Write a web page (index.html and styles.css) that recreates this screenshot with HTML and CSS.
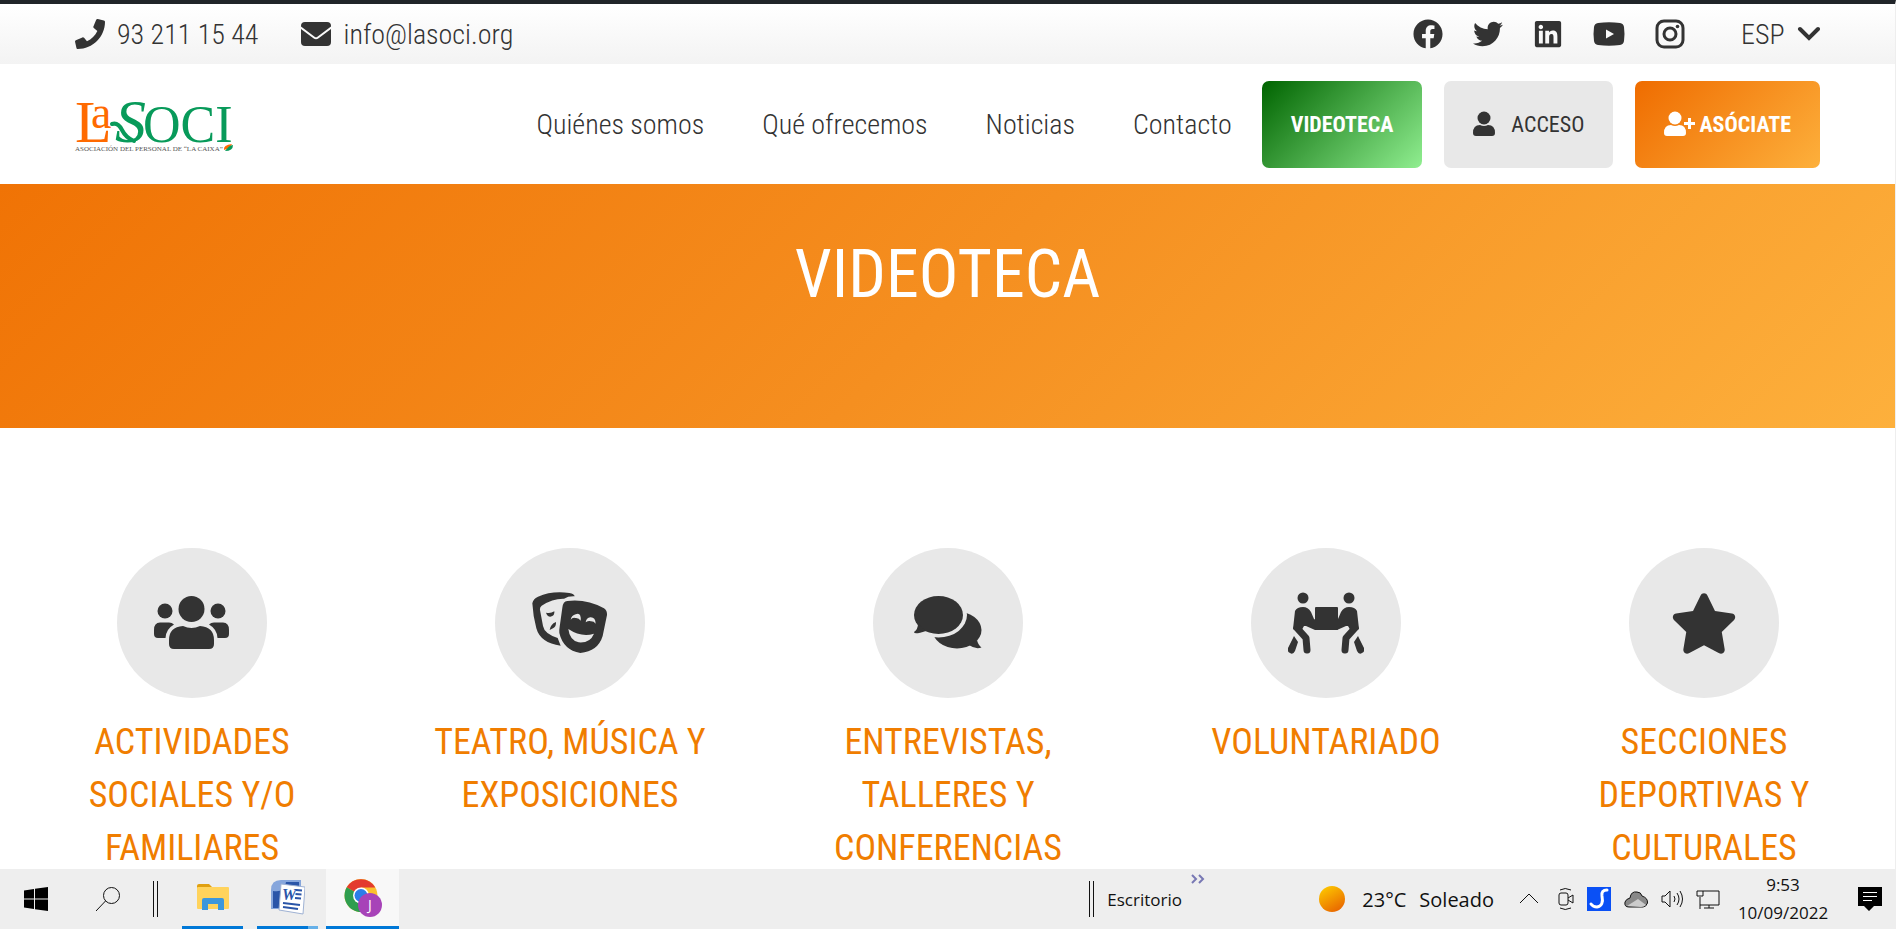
FILE: index.html
```html
<!DOCTYPE html>
<html lang="es">
<head>
    <meta charset="UTF-8">
    <meta name="viewport" content="width=device-width, initial-scale=1.0">
    <title>Videoteca - La Soci</title>
    <link rel="stylesheet" href="styles.css">
</head>
<body>
    <div class="site">
        <!-- Barra superior -->
        <div class="topbar">
            <div class="contact">
                <a href="#">
                    <svg width="30" height="30" viewBox="0 0 512 512"><path d="M493.4 24.6l-104-24c-11.3-2.6-22.9 3.3-27.5 13.9l-48 112c-4.2 9.8-1.4 21.3 6.9 28l60.6 49.6c-36 76.7-98.9 140.5-177.2 177.2l-49.6-60.6c-6.8-8.3-18.2-11.1-28-6.9l-112 48C3.9 366.5-2 378.1.6 389.4l24 104C27.1 504.2 36.7 512 48 512c256.1 0 464-207.5 464-464 0-11.2-7.7-20.9-18.6-23.4z"/></svg>
                    <span>93 211 15 44</span>
                </a>
                <a href="#">
                    <svg width="30" height="30" viewBox="0 0 30 30"><rect y="3" width="30" height="24" rx="4"/><path class="line-light" d="M-1 8L13 18.5Q15 20 17 18.5L31 8"/></svg>
                    <span>info@lasoci.org</span>
                </a>
            </div>
            <div class="social">
                <a href="#" aria-label="Facebook"><svg width="30" height="30" viewBox="0 0 512 512"><path d="M504 256C504 119 393 8 256 8S8 119 8 256c0 123.78 90.69 226.38 209.25 245V327.69h-63V256h63v-54.64c0-62.15 37-96.48 93.67-96.48 27.14 0 55.52 4.84 55.52 4.84v61h-31.28c-30.8 0-40.41 19.12-40.41 38.73V256h68.78l-11 71.69h-57.78V501C413.31 482.38 504 379.78 504 256z"/></svg></a>
                <a href="#" aria-label="Twitter"><svg width="30" height="30" viewBox="0 0 512 512"><path d="M459.37 151.716c.325 4.548.325 9.097.325 13.645 0 138.72-105.583 298.558-298.558 298.558-59.452 0-114.68-17.219-161.137-47.106 8.447.974 16.568 1.299 25.34 1.299 49.055 0 94.213-16.568 130.274-44.832-46.132-.975-84.792-31.188-98.112-72.772 6.498.974 12.995 1.624 19.818 1.624 9.421 0 18.843-1.3 27.614-3.573-48.081-9.747-84.143-51.98-84.143-102.985v-1.299c13.969 7.797 30.214 12.67 47.431 13.319-28.264-18.843-46.781-51.005-46.781-87.391 0-19.492 5.197-37.36 14.294-52.954 51.655 63.675 129.3 105.258 216.365 109.807-1.624-7.797-2.599-15.918-2.599-24.04 0-57.828 46.782-104.934 104.934-104.934 30.213 0 57.502 12.67 76.67 33.137 23.715-4.548 46.456-13.32 66.599-25.34-7.798 24.366-24.366 44.833-46.132 57.827 21.117-2.273 41.584-8.122 60.426-16.243-14.292 20.791-32.161 39.308-52.628 54.253z"/></svg></a>
                <a href="#" aria-label="LinkedIn"><svg width="30" height="30" viewBox="-32 0 512 512"><path d="M416 32H31.9C14.3 32 0 46.5 0 64.3v383.4C0 465.5 14.3 480 31.9 480H416c17.6 0 32-14.5 32-32.3V64.3c0-17.8-14.4-32.3-32-32.3zM135.4 416H69V202.2h66.5V416zm-33.2-243c-21.3 0-38.5-17.3-38.5-38.5S80.9 96 102.2 96c21.2 0 38.5 17.3 38.5 38.5 0 21.3-17.2 38.5-38.5 38.5zm282.1 243h-66.4V312c0-24.8-.5-56.7-34.5-56.7-34.6 0-39.9 27-39.9 54.9V416h-66.4V202.2h63.7v29.2h.9c8.9-16.8 30.6-34.5 62.9-34.5 67.2 0 79.7 44.3 79.7 101.9V416z"/></svg></a>
                <a href="#" aria-label="YouTube"><svg width="32" height="30" viewBox="0 0 32 30"><path d="M5 4Q16 2.500 27 4Q30.500 4.500 31 8Q32 15 31 22Q30.500 25.500 27 26Q16 27.500 5 26Q1.500 25.500 1 22Q0 15 1 8Q1.500 4.500 5 4zM13 10.500V19.500L21 15z"/></svg></a>
                <a href="#" aria-label="Instagram"><svg width="30" height="30" viewBox="0 0 30 30"><rect class="line" x="2" y="2" width="26" height="26" rx="7"/><circle class="line" cx="15" cy="15" r="6"/><circle cx="22.500" cy="7.500" r="1.800"/></svg></a>
            </div>
            <div class="language">
                <label class="hidden" for="language">Idioma</label>
                <select id="language">
                    <option>ESP</option>
                    <option>CAT</option>
                </select>
                <svg width="24" height="16" viewBox="0 0 24 16"><path class="chevron" d="M4 3l9 9 9-9"/></svg>
            </div>
        </div>

        <!-- Cabecera -->
        <header class="header">
            <a class="logo" href="#" aria-label="La Soci">
                <svg width="160" height="56" viewBox="75 96 160 56">
                    <g class="logo-orange">
                        <text x="75" y="142" font-size="60">L</text>
                        <text x="91" y="128" font-size="46">a</text>
                    </g>
                    <g class="logo-green">
                        <text x="115" y="142" font-size="62" font-style="italic">S</text>
                        <text x="143" y="142" font-size="52">OCI</text>
                    </g>
                    <path class="logo-swash" d="M112 124Q118 122 122 130T134 141"/>
                    <text class="logo-caption" x="75" y="151" font-size="7">ASOCIACIÓN DEL PERSONAL DE “LA CAIXA”</text>
                    <path fill="#ff6a00" d="M224 150Q223 145 232 144Q230 148 224 150z"/>
                    <path fill="#089a5a" d="M225 151Q229 145 233 145Q233 151 225 151z"/>
                </svg>
            </a>
            <nav class="menu">
                <a href="#">Quiénes somos</a>
                <a href="#">Qué ofrecemos</a>
                <a href="#">Noticias</a>
                <a href="#">Contacto</a>
            </nav>
            <div class="buttons">
                <button class="btn btn-green">VIDEOTECA</button>
                <button class="btn btn-gray">
                    <svg width="22" height="26" viewBox="0 0 22 26"><circle cx="11" cy="7" r="6.500"/><path d="M0 22Q0 14 7 14Q11 16 15 14Q22 14 22 22Q22 25 19 25H3Q0 25 0 22z"/></svg>
                    ACCESO
                </button>
                <button class="btn btn-orange">
                    <svg width="31" height="26" viewBox="0 0 31 26"><circle cx="11" cy="7" r="6.500"/><path d="M0 22Q0 14 7 14Q11 16 15 14Q22 14 22 22Q22 25 19 25H3Q0 25 0 22zM24 7h3v4h4v3h-4v4h-3v-4h-4v-3h4z"/></svg>
                    ASÓCIATE
                </button>
            </div>
        </header>

        <section class="banner">
            <h1>VIDEOTECA</h1>
        </section>

        <!-- Categorías -->
        <main class="categories">
            <a class="category" href="#">
                <span class="circle">
                    <svg width="76" height="54" viewBox="154 596 76 54">
                        <circle cx="165" cy="611" r="7.500"/><circle cx="218" cy="611" r="7.500"/><circle cx="191.500" cy="609" r="13"/>
                        <path d="M160 622.500H169Q172 622.500 174 624.500Q166 629 165.500 638H158Q154 638 154 634V630Q154 622.500 160 622.500z"/>
                        <path d="M223 622.500H214Q211 622.500 209 624.500Q217 629 217.500 638H225Q229 638 229 634V630Q229 622.500 223 622.500z"/>
                        <path d="M183 626Q191.500 630 200 626Q214 627 214 640V644Q214 649 209 649H174Q169 649 169 644V640Q169 627 183 626z"/>
                    </svg>
                </span>
                <h2>ACTIVIDADES SOCIALES Y/O FAMILIARES</h2>
            </a>
            <a class="category" href="#">
                <span class="circle">
                    <svg width="76" height="62" viewBox="36 28 228 186">
                        <path d="M37 62Q39 49 54 42Q95 24 148 31Q163 34 164 41Q145 40 132 48Q98 47 65 69Q59 73 60 82L69 130Q73 153 113 166L122 189Q61 181 49 137Q39 100 37 62z"/>
                        <path d="M78 90Q91 94 103 86Q105 101 91 102Q82 102 78 90zM89 142Q91 125 108 118Q109 132 99 137z"/>
                        <path fill-rule="evenodd" d="M142 55Q200 48 252 77Q262 84 261 97L248 160Q234 206 181 211Q130 202 118 151Q117 143 119 132L127 75Q129 56 142 55zM152 111Q157 104 166 106Q177 105 182 114Q184 88 167 95Q155 98 152 111zM197 119Q206 113 213 116Q222 116 227 123Q226 103 211 104Q199 106 197 119zM145 139Q149 173 176 179Q210 182 222 153Q184 165 145 139z"/>
                    </svg>
                </span>
                <h2>TEATRO, MÚSICA Y EXPOSICIONES</h2>
            </a>
            <a class="category" href="#">
                <span class="circle">
                    <svg width="70" height="54" viewBox="913 596 70 54">
                        <ellipse cx="957" cy="630" rx="24.500" ry="18.500"/>
                        <path d="M977 640Q978 645 981.500 647.500Q976 650 969 645z"/>
                        <ellipse class="bubble-gap" cx="938.500" cy="615" rx="28.500" ry="22.500"/>
                        <ellipse cx="938.500" cy="615" rx="24.500" ry="19"/>
                        <path d="M918 624Q918 629 914 632Q914 635 926 631z"/>
                    </svg>
                </span>
                <h2>ENTREVISTAS, TALLERES Y CONFERENCIAS</h2>
            </a>
            <a class="category" href="#">
                <span class="circle">
                    <svg width="76" height="62" viewBox="1287 592 76 62">
                        <rect x="1314" y="607" width="23" height="23" rx="1"/>
                        <g id="carrier">
                            <circle cx="1302" cy="598" r="5.500"/>
                            <path class="limb" d="M1296 628L1305 638L1306 650"/>
                            <path d="M1293 636L1297 642L1294 651Q1292 655 1289 653Q1286 652 1287 648z"/>
                            <path d="M1292 629L1294 611Q1296 607 1302 607Q1307 607 1310 612L1313 619Q1314 620 1317 620V630H1314L1305 626L1303 626L1299 633z"/>
                        </g>
                        <use href="#carrier" transform="translate(2650 0) scale(-1 1)"/>
                    </svg>
                </span>
                <h2>VOLUNTARIADO</h2>
            </a>
            <a class="category" href="#">
                <span class="circle">
                    <svg width="68" height="61" viewBox="0 0 576 512"><path d="M316.9 18C311.6 7 300.4 0 288.1 0s-23.4 7-28.8 18L195 150.3 51.4 171.5c-12 1.800-22 10.200-25.700 21.700s-.7 24.200 7.900 32.700L137.800 329 113.200 474.700c-2 12 3 24.200 12.900 31.300s23 8 33.800 2.300l128.300-68.500 128.300 68.500c10.800 5.700 23.900 4.900 33.800-2.300s14.900-19.300 12.900-31.300L438.500 329 542.700 225.900c8.600-8.500 11.700-21.200 7.900-32.700s-13.700-19.900-25.700-21.700L381.200 150.300 316.900 18z"/></svg>
                </span>
                <h2>SECCIONES DEPORTIVAS Y CULTURALES</h2>
            </a>
        </main>
    </div>

    <!-- Barra de tareas -->
    <footer class="taskbar">
        <button class="task" aria-label="Inicio"><svg width="24" height="24" viewBox="0 0 24 24"><path d="M0 3.500L10 2v9.500H0zM11 1.800L24 0v11.500H11zM0 12.500h10V22L0 20.500zM11 12.500h13V24l-13-1.800z"/></svg></button>
        <button class="task" aria-label="Buscar"><svg class="thin" width="24" height="24" viewBox="0 0 24 24"><circle cx="15.500" cy="8.500" r="8"/><path d="M9.500 14L0 24"/></svg></button>
        <span class="grip"></span>
        <button class="task app" aria-label="Explorador de archivos">
            <svg width="32" height="28" viewBox="0 0 32 28"><path fill="#e0a010" d="M0 2Q0 0 2 0H12L15 3V7H0z"/><rect y="3" width="32" height="22" rx="1" fill="#ffd35c"/><path fill="#3c97dc" d="M5 26V16Q5 14 7 14H25Q27 14 27 16V26H21V20H11V26z"/></svg>
        </button>
        <button class="task app app-word" aria-label="Word">
            <svg width="34" height="35" viewBox="0 0 34 35"><path fill="#86a6dc" d="M0 29V10Q0 0 10 0H30V29z"/><path fill="#2a55a8" d="M2 28V11Q14 13 15 2H28V28z"/><path fill="#fff" stroke="#9fb2d4" d="M10 4L34 7L32 34L8 30z"/><text x="11" y="20" font-size="16">W</text><path stroke="#2a55a8" stroke-width="2" d="M25 10l6 .5M24.500 14l6 .5M24 18l6 .5M12 23l17 2M12 27l15 2"/></svg>
        </button>
        <button class="task app app-active" aria-label="Chrome">
            <svg width="38" height="38" viewBox="0 0 38 38"><circle cx="17" cy="16.500" r="16.500" fill="#fbc02d"/><path fill="#e33b2e" d="M17 16.500L2.700 8.300A16.500 16.500 0 0 1 31.300 8.500H17z"/><path fill="#2f9e4f" d="M17 16.500L2.700 8.300A16.500 16.500 0 0 0 17 33L24 20.500z"/><circle cx="17" cy="16.500" r="8" fill="#fff"/><circle cx="17" cy="16.500" r="6.500" fill="#2b7de9"/><circle cx="26" cy="26" r="12" fill="#a743b8"/><text class="avatar" x="26" y="31" font-size="14">J</text></svg>
        </button>

        <span class="grip grip-desktop"></span>
        <span class="desktop">Escritorio</span>
        <svg class="more" width="14" height="10" viewBox="0 0 14 10"><path d="M1 1l4 4-4 4M8 1l4 4-4 4"/></svg>
        <span class="sun"></span>
        <span class="weather"><span>23°C</span><span>Soleado</span></span>
        <svg class="thin arrow" width="18" height="24" viewBox="0 0 18 24"><path d="M0 16l9-9 9 9"/></svg>
        <div class="tray">
            <svg class="thin" width="16" height="24" viewBox="0 0 16 24"><rect x="1" y="6" width="9" height="12" rx="2"/><path d="M10 11l5-3v8l-5-3M2 3q5-3 11 0M2 21q5 3 11 0"/></svg>
            <svg width="24" height="24" viewBox="0 0 24 24"><rect width="24" height="24" fill="#0a50f5"/><path fill="none" stroke="#fff" stroke-width="3" stroke-linecap="round" d="M20 3Q14 3 15 9Q17 19 10 20Q6 20 4 17"/></svg>
            <svg class="thin" width="24" height="24" viewBox="0 0 24 24"><path fill="#888" d="M5 20Q0 20 1 15Q2 12 6 11Q7 4 13 5Q17 5 18 9Q24 11 23.500 16Q22 20 19 20z"/><path fill="#ccc" stroke="none" d="M3 19L14 12L22 18Q20 20 17 20z"/></svg>
            <svg class="thin" width="22" height="24" viewBox="0 0 22 24"><path d="M1 9h3l5-5v16l-5-5H1zM13 9q2 3 0 6M16 6q4 6 0 12M19 4q5 8 0 16"/></svg>
            <svg class="thin" width="24" height="24" viewBox="0 0 24 24"><path d="M7 4h16v14H4M4 10v12M1 4h6v5H1zM13 18v3M8 21h10"/></svg>
        </div>
        <div class="clock"><span>9:53</span><span>10/09/2022</span></div>
        <button class="task notices" aria-label="Notificaciones"><svg width="24" height="24" viewBox="0 0 24 24"><path d="M0 0h24v19h-8l-5 5-5-5H0z"/><path stroke="#fff" d="M5 5.500h14M5 9.500h14M5 13.500h9"/></svg></button>
    </footer>
</body>
</html>
```
FILE: styles.css
```css
* {
    box-sizing: border-box;
}

body {
    margin: 0;
    height: 100vh;
    display: flex;
    flex-direction: column;
    font-family: "Roboto Condensed", Roboto, sans-serif;
    color: #333;
    background-color: #fff;
}

a {
    color: inherit;
    text-decoration: none;
}

button {
    border: none;
    font-family: inherit;
    cursor: pointer;
}

svg {
    display: block;
    flex-shrink: 0;
    fill: #333;
}

.hidden {
    display: none;
}

.site {
    flex: 1;
    min-height: 0;
    overflow: hidden;
    border-top: 4px solid #212529;
    border-right: 1px solid #eee;
}

/* Barra superior */
.topbar {
    display: flex;
    align-items: center;
    height: 60px;
    padding: 0 75px;
    font-size: 28px;
    font-weight: 300;
    background: linear-gradient(#fff, #f3f3f3);
}

.contact {
    display: flex;
    gap: 43px;
    margin-right: auto;
}

.contact a {
    display: flex;
    align-items: center;
    gap: 12px;
}

.line-light {
    fill: none;
    stroke: #fafafa;
    stroke-width: 2;
}

.line {
    fill: none;
    stroke: #333;
    stroke-width: 3;
}

.social {
    display: flex;
    gap: 30px;
}

.language {
    display: flex;
    align-items: center;
    gap: 10px;
    margin-left: 56px;
}

.language select {
    appearance: none;
    border: none;
    padding: 0;
    background: none;
    color: inherit;
    font-family: inherit;
    font-size: 28px;
    font-weight: 300;
}

.chevron {
    fill: none;
    stroke: #333;
    stroke-width: 4;
    stroke-linecap: round;
}

/* Cabecera */
.header {
    display: flex;
    align-items: center;
    height: 120px;
    padding: 0 75px;
}

.logo svg {
    overflow: visible;
}

.logo text {
    font-family: "Liberation Serif", serif;
}

.logo-orange {
    fill: #ff6a00;
}

.logo-green {
    fill: #089a5a;
}

.logo-swash {
    fill: none;
    stroke: #089a5a;
    stroke-width: 4;
    stroke-linecap: round;
}

.logo-caption {
    fill: #555;
}

.menu {
    display: flex;
    gap: 58px;
    margin-left: auto;
    font-size: 28px;
    font-weight: 300;
}

.buttons {
    display: flex;
    gap: 22px;
    margin-left: 30px;
}

.btn {
    display: flex;
    align-items: center;
    justify-content: center;
    height: 87px;
    padding: 0 29px;
    border-radius: 7px;
    font-size: 22px;
}

.btn svg {
    fill: currentColor;
}

.btn-green {
    color: #fff;
    font-weight: bold;
    background: linear-gradient(135deg, #006400, #90ee90);
}

.btn-gray {
    gap: 16px;
    color: #333;
    background-color: #e8e8e8;
}

.btn-orange {
    gap: 4px;
    color: #fff;
    font-weight: bold;
    background: linear-gradient(135deg, #ef6c00, #fdb03c);
}

/* Banner */
.banner {
    height: 244px;
    padding-top: 48px;
    text-align: center;
    color: #fff;
    background: linear-gradient(135deg, #f07305, #f58f20 50%, #fdb03c);
}

.banner h1 {
    margin: 0;
    font-size: 66px;
    font-weight: normal;
    line-height: 86px;
}

/* Categorías */
.categories {
    display: grid;
    grid-template-columns: repeat(5, 1fr);
    padding: 120px 2px 0 3px;
}

.category {
    display: flex;
    flex-direction: column;
    align-items: center;
    padding: 0 40px;
    text-align: center;
}

.circle {
    display: flex;
    align-items: center;
    justify-content: center;
    width: 150px;
    height: 150px;
    border-radius: 50%;
    background-color: #e8e8e8;
}

.category h2 {
    margin: 18px 0 0;
    color: #f07d00;
    font-size: 36px;
    font-weight: normal;
    line-height: 53px;
}

.bubble-gap {
    fill: #e8e8e8;
}

.limb {
    fill: none;
    stroke: #333;
    stroke-width: 7;
    stroke-linecap: round;
    stroke-linejoin: round;
}

/* Barra de tareas */
.taskbar {
    display: flex;
    align-items: center;
    flex-shrink: 0;
    height: 60px;
    background-color: #eee;
    color: #111;
    font-family: "Open Sans", "Noto Sans", sans-serif;
    font-size: 17px;
}

.taskbar svg {
    fill: #000;
}

.taskbar .thin {
    fill: none;
    stroke: #111;
    stroke-width: 1;
}

.task {
    display: flex;
    align-items: center;
    justify-content: center;
    width: 72px;
    height: 60px;
    padding: 0;
    background: none;
}

.grip {
    width: 5px;
    height: 36px;
    margin: 0 24px 0 9px;
    border-left: 1px solid #111;
    border-right: 1px solid #111;
}

.app {
    width: 61px;
    margin-right: 14px;
    border-bottom: 3px solid #0078d7;
}

.app-word {
    margin-right: 8px;
    border-image: linear-gradient(to right, #0078d7 80%, #66b0e8 80%) 3;
}

.app-word text {
    fill: #2a55a8;
    font-family: "Liberation Serif", serif;
    font-style: italic;
    font-weight: bold;
}

.app-active {
    width: 73px;
    background-color: #f8f8f8;
}

.avatar {
    fill: #fff;
    text-anchor: middle;
}

.grip-desktop {
    margin: 0 13px 0 auto;
}

.desktop {
    width: 84px;
}

.more {
    align-self: flex-start;
    margin-top: 5px;
}

.taskbar .more {
    fill: none;
    stroke: #7878b4;
    stroke-width: 2;
}

.sun {
    width: 26px;
    height: 26px;
    margin: 0 17px 0 114px;
    border-radius: 50%;
    background: linear-gradient(150deg, #ffd000, #e65a00);
}

.weather {
    display: flex;
    gap: 13px;
    font-size: 20px;
}

.arrow {
    margin: 0 20px 0 26px;
}

.tray {
    display: flex;
    align-items: center;
    gap: 13px;
}

.clock {
    display: flex;
    flex-direction: column;
    align-items: center;
    width: 92px;
    margin-left: 17px;
    line-height: 28px;
}

.notices {
    width: 24px;
    margin: 0 14px 0 29px;
}
```
